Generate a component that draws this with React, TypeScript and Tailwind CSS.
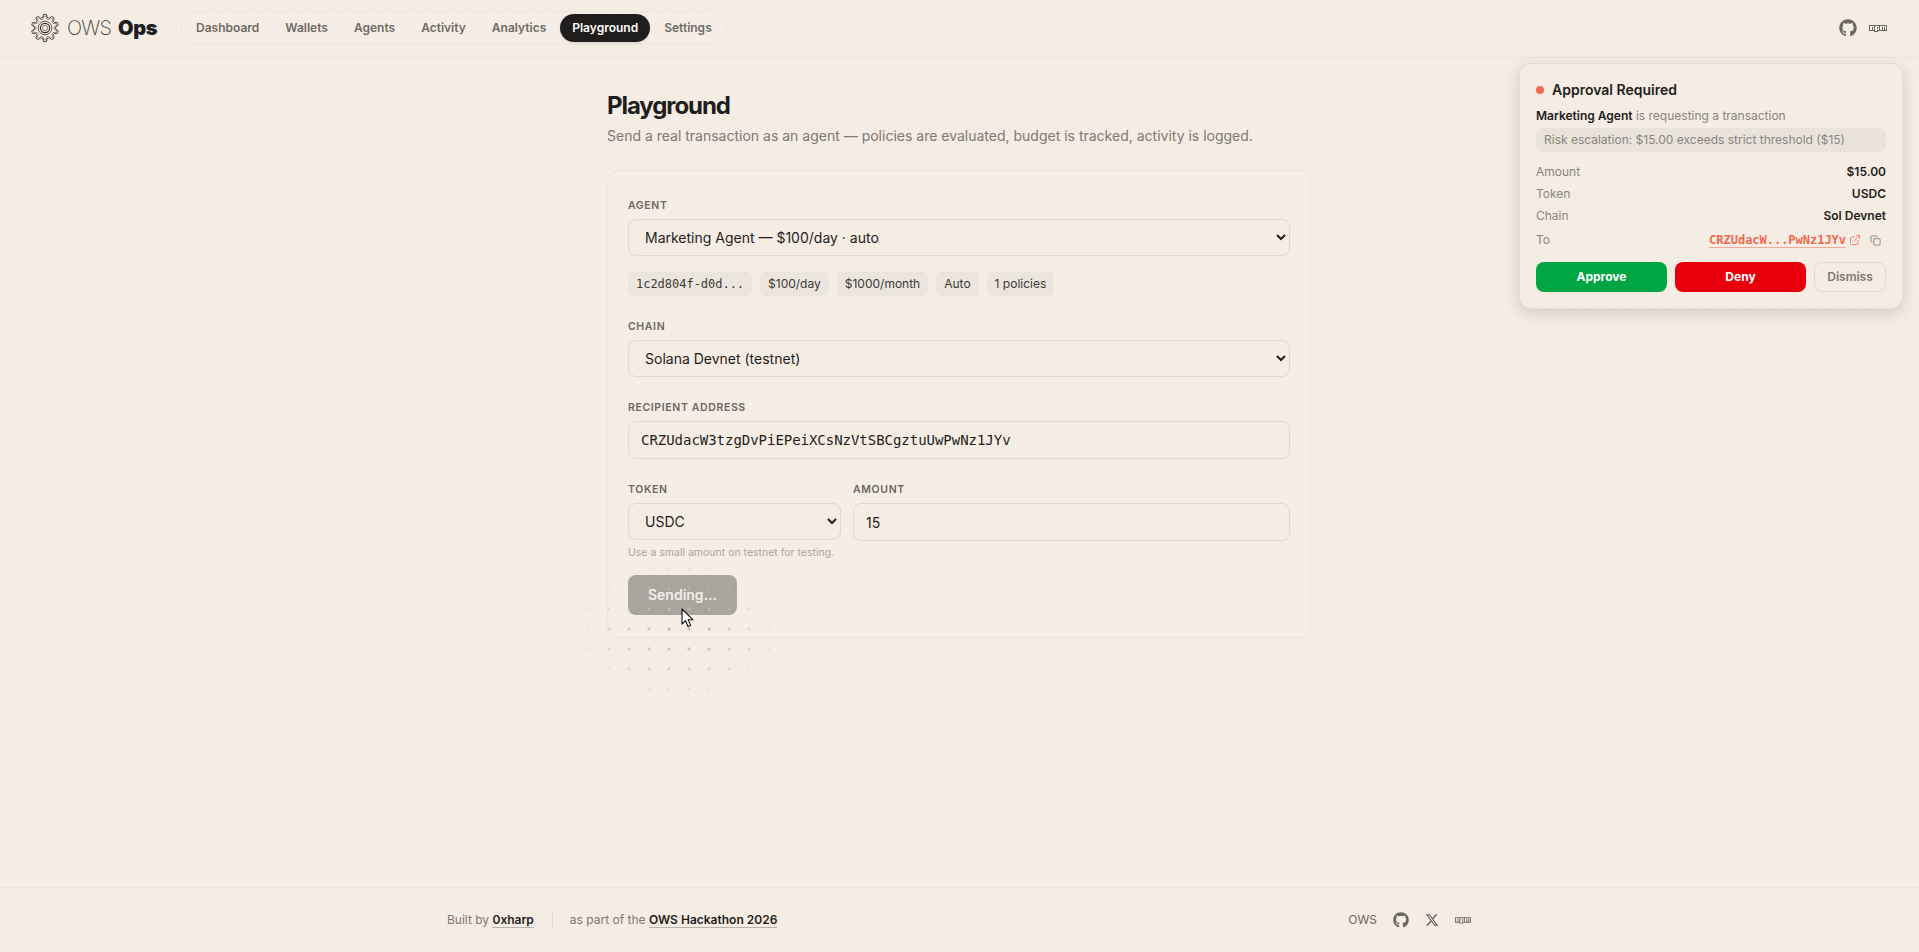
import { FaGithub, FaNpm } from "react-icons/fa";
import { FaXTwitter } from "react-icons/fa6";
import { ExternalLink, Copy } from "lucide-react";

const nav = ["Dashboard", "Wallets", "Agents", "Activity", "Analytics", "Playground", "Settings"];

function gearPath(outer: number, inner: number, teeth: number) {
  const pts: string[] = [];
  const step = (Math.PI * 2) / teeth;
  for (let i = 0; i < teeth; i++) {
    const a = i * step - Math.PI / 2;
    const seq: [number, number][] = [
      [inner, a - step * 0.3],
      [outer, a - step * 0.17],
      [outer, a + step * 0.17],
      [inner, a + step * 0.3],
    ];
    for (const [r, t] of seq) pts.push(`${(14 + r * Math.cos(t)).toFixed(2)} ${(14 + r * Math.sin(t)).toFixed(2)}`);
  }
  return "M" + pts.join(" L") + " Z";
}

function Gear() {
  return (
    <svg width="28" height="28" viewBox="0 0 28 28" fill="none" stroke="#2e2c2a" strokeWidth="0.8" strokeLinejoin="round">
      <path d={gearPath(13.6, 10.8, 10)} />
      <path d={gearPath(11.9, 9.2, 10)} strokeOpacity="0.6" />
      <circle cx="14" cy="14" r="6.8" />
      <circle cx="14" cy="14" r="4.6" strokeWidth="1.1" />
      <circle cx="14" cy="14" r="2.6" strokeOpacity="0.7" />
    </svg>
  );
}

function Label({ children }: { children: React.ReactNode }) {
  return <label className="block text-[10.5px] leading-4 font-semibold uppercase tracking-[0.06em] text-[#6b6762] mb-[5px]">{children}</label>;
}

const fieldBase = "w-full h-[37px] px-3 rounded-lg border border-[#e0d9d1] bg-[#f5ece3] text-sm text-[#1f1e1c] outline-none";

function Chip({ children, mono }: { children: React.ReactNode; mono?: boolean }) {
  return (
    <span className={`h-6 px-2 rounded-[5px] bg-[#ebe5de] text-[#3d3a37] text-xs flex items-center ${mono ? "font-['DejaVu_Sans_Mono',monospace] tracking-[-0.02px]" : ""}`}>
      {children}
    </span>
  );
}

function Row({ k, v }: { k: string; v: string }) {
  return (
    <div className="flex justify-between text-xs leading-4">
      <span className="text-[#8a8580]">{k}</span>
      <span className="font-semibold text-[#1f1e1c]">{v}</span>
    </div>
  );
}

export default function App() {
  return (
    <div className="relative min-h-screen flex flex-col bg-[#f5ece3] font-['Inter',sans-serif] text-[#1f1e1c] overflow-hidden">
      <div className="pointer-events-none absolute inset-0 bg-[radial-gradient(circle,#efe6dc_0.6px,transparent_1px)] bg-[length:20px_20px] bg-[position:-1px_-1px]" />

      <header className="relative h-[58px] shrink-0 border-b border-[#ebe3da] flex items-center justify-between pl-[31px] pr-[32px] pb-[2px]">
        <div className="flex items-center">
          <Gear />
          <span className="ml-2 text-xl font-extralight tracking-[-0.04em] text-[#3d3a37]">OWS</span>
          <span className="ml-[7px] text-xl font-black tracking-[-0.02em] text-[#1f1e1c]">Ops</span>
          <nav className="ml-[24px] flex items-center gap-[2px] p-[2px] rounded-full border border-[#ede6dd] bg-[#f6eee6]">
            {nav.map((n) => (
              <a
                key={n}
                className={`h-7 px-3 flex items-center rounded-full text-xs font-semibold ${n === "Playground" ? "bg-[#1f1e1c] text-white shadow-sm" : "text-[#6f6b66]"}`}
              >
                {n}
              </a>
            ))}
          </nav>
        </div>
        <div className="flex items-center gap-3 text-[#6b6762]">
          <FaGithub size={18} />
          <FaNpm size={18} />
        </div>
      </header>

      <main className="relative flex-1 w-[704px] ml-[607px] pt-[32px]">
        <h1 className="text-2xl leading-8 font-bold tracking-[-0.045em] text-[#1f1e1c]">Playground</h1>
        <p className="mt-[2px] text-sm leading-6 text-[#7d7974]">
          Send a real transaction as an agent — policies are evaluated, budget is tracked, activity is logged.
        </p>

        <section className="relative mt-[22px] rounded-xl border border-[#ede6dd] bg-[#f6eee6] px-5 pb-[22px] pt-[27px]">
          <Label>Agent</Label>
          <select className={fieldBase} defaultValue="a">
            <option value="a">Marketing Agent — $100/day · auto</option>
          </select>
          <div className="mt-4 flex gap-2">
            <Chip mono>1c2d804f-d0d...</Chip>
            <Chip>$100/day</Chip>
            <Chip>$1000/month</Chip>
            <Chip>Auto</Chip>
            <Chip>1 policies</Chip>
          </div>

          <div className="mt-[23px]">
            <Label>Chain</Label>
            <select className={fieldBase} defaultValue="s">
              <option value="s">Solana Devnet (testnet)</option>
            </select>
          </div>

          <div className="mt-[23px]">
            <Label>Recipient Address</Label>
            <input
              readOnly
              value="CRZUdacW3tzgDvPiEPeiXCsNzVtSBCgztuUwPwNz1JYv"
              className={`${fieldBase} h-[38px] font-['DejaVu_Sans_Mono',monospace] tracking-[-0.03px]`}
            />
          </div>

          <div className="mt-[23px] flex gap-3">
            <div className="w-[213px]">
              <Label>Token</Label>
              <select className={fieldBase} defaultValue="u">
                <option value="u">USDC</option>
              </select>
            </div>
            <div className="flex-1">
              <Label>Amount</Label>
              <input readOnly value="15" className={`${fieldBase} h-[38px]`} />
            </div>
          </div>
          <p className="mt-[4px] text-[10.5px] leading-4 text-[#aaa59f]">Use a small amount on testnet for testing.</p>

          <button className="mt-[14px] block h-10 w-[109px] rounded-lg bg-[#a9a59e] text-sm font-semibold text-[#f3eee8]">Sending...</button>
        </section>
      </main>

      <div className="pointer-events-none absolute left-[579px] top-[559px] w-[200px] h-[140px] bg-[radial-gradient(circle,#c4bdb4_1.3px,transparent_1.8px)] bg-[length:20px_20px] [mask-image:radial-gradient(ellipse_at_center,black_15%,transparent_72%)]" />
      <svg className="absolute left-[681px] top-[608px]" width="14" height="20" viewBox="0 0 14 20">
        <path d="M1 1 V16 L4.6 12.7 L7 18.5 L9.6 17.4 L7.2 11.8 H12 Z" fill="#fff" stroke="#111" strokeWidth="1.1" strokeLinejoin="round" />
      </svg>

      <aside className="absolute left-[1519px] top-[63px] w-[384px] rounded-xl border border-[#e6dfd6] bg-[#f5ece3] p-4 shadow-[0_4px_14px_rgba(60,50,40,0.18)]">
        <div className="flex items-center gap-2 text-sm font-semibold leading-5">
          <span className="w-2 h-2 rounded-full bg-[#ef6a52]" />
          Approval Required
        </div>
        <p className="mt-[8px] text-xs leading-4 text-[#8a8580]">
          <span className="font-semibold text-[#1f1e1c]">Marketing Agent</span> is requesting a transaction
        </p>
        <div className="mt-[4px] h-6 rounded-md bg-[#e9e3dc] px-2 flex items-center text-xs text-[#8a8580]">
          Risk escalation: $15.00 exceeds strict threshold ($15)
        </div>
        <div className="mt-3 flex flex-col gap-[6px]">
          <Row k="Amount" v="$15.00" />
          <Row k="Token" v="USDC" />
          <Row k="Chain" v="Sol Devnet" />
          <div className="flex items-center justify-between text-xs leading-4 mt-[2px]">
            <span className="text-[#8a8580]">To</span>
            <span className="flex items-center">
              <a className="font-['DejaVu_Sans_Mono',monospace] tracking-[-0.02px] text-[#ef6a52] font-bold text-xs border-b border-[#ef6a52]/50 leading-[14px]">CRZUdacW...PwNz1JYv</a>
              <ExternalLink size={12} className="ml-[3px] text-[#ef8a75]" />
              <Copy size={11} className="ml-[9px] mr-[5px] text-[#8a8580]" />
            </span>
          </div>
        </div>
        <div className="mt-[14px] flex gap-2">
          <button className="flex-1 h-[30px] rounded-lg bg-[#00a644] text-white text-xs font-bold">Approve</button>
          <button className="flex-1 h-[30px] rounded-lg bg-[#e7000b] text-white text-xs font-bold">Deny</button>
          <button className="w-[72px] h-[30px] rounded-lg border border-[#e0d9d1] text-[#7d7974] text-xs font-semibold">Dismiss</button>
        </div>
      </aside>

      <footer className="relative h-[65px] shrink-0 border-t border-[#ebe3da]">
        <div className="ml-[447px] w-[1024px] h-full flex items-center justify-between text-xs text-[#7d7974]">
          <div className="flex items-center">
            <span>Built by <a className="font-semibold text-[#1f1e1c] border-b border-[#b8b2aa]">0xharp</a></span>
            <span className="ml-[18px] mr-[17px] w-px h-[14px] bg-[#dcd5cc]" />
            <span>as part of the <a className="font-semibold text-[#1f1e1c] border-b border-[#b8b2aa]">OWS Hackathon 2026</a></span>
          </div>
          <div className="flex items-center gap-[16px] text-[#6b6762]">
            <span>OWS</span>
            <FaGithub size={16} />
            <FaXTwitter size={14} />
            <FaNpm size={16} />
          </div>
        </div>
      </footer>
    </div>
  );
}
